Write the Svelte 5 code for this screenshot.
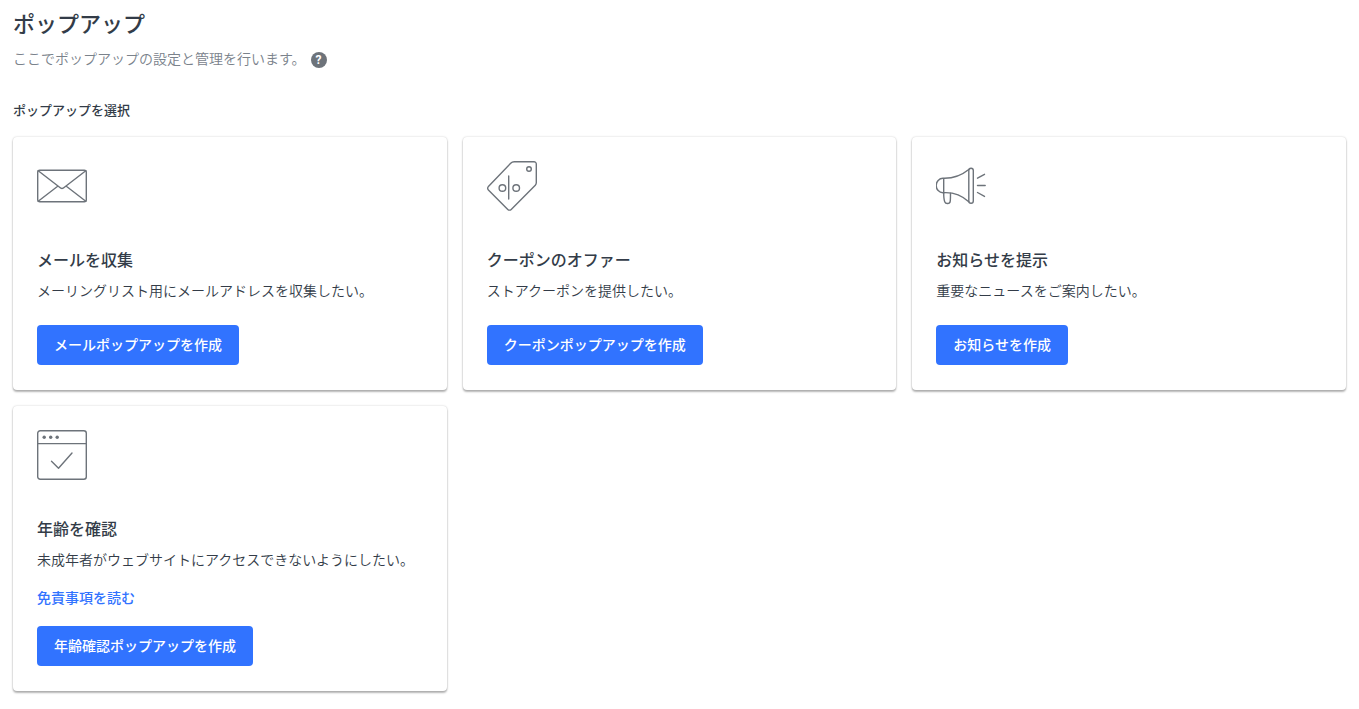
<script lang="ts">
	type Popup = {
		id: 'email' | 'coupon' | 'notice' | 'age';
		title: string;
		description: string;
		action: string;
		link?: string;
	};

	const popups: Popup[] = [
		{
			id: 'email',
			title: 'メールを収集',
			description: 'メーリングリスト用にメールアドレスを収集したい。',
			action: 'メールポップアップを作成'
		},
		{
			id: 'coupon',
			title: 'クーポンのオファー',
			description: 'ストアクーポンを提供したい。',
			action: 'クーポンポップアップを作成'
		},
		{
			id: 'notice',
			title: 'お知らせを提示',
			description: '重要なニュースをご案内したい。',
			action: 'お知らせを作成'
		},
		{
			id: 'age',
			title: '年齢を確認',
			description: '未成年者がウェブサイトにアクセスできないようにしたい。',
			action: '年齢確認ポップアップを作成',
			link: '免責事項を読む'
		}
	];
</script>

<main class="page">
	<header>
		<h1>ポップアップ</h1>
		<div class="intro">
			<p>ここでポップアップの設定と管理を行います。</p>
			<button type="button" class="help">?</button>
		</div>
	</header>

	<h2>ポップアップを選択</h2>

	<div class="cards">
		{#each popups as popup (popup.id)}
			<section class="card">
				<svg class="icon" viewBox="0 0 50 50" aria-hidden="true">
					{#if popup.id === 'email'}
						<rect x="0.7" y="9.2" width="48.6" height="31.6" rx="2" />
						<path d="M1.2 9.7 22.6 26.3Q25 28.7 27.4 26.3L48.8 9.7M1.2 40.3 21 25M48.8 40.3 29 25" />
					{:else if popup.id === 'coupon'}
						<path d="M27.2 .7H47a2.3 2.3 0 0 1 2.3 2.3V21.8a3.5 3.5 0 0 1-1 2.4L24.2 48.4a2.4 2.4 0 0 1-3.4 0L1.4 29a2.4 2.4 0 0 1 0-3.4L23.7 2.2A5 5 0 0 1 27.2 .7Z" />
						<circle cx="42" cy="8" r="2.3" />
						<circle cx="15.4" cy="27" r="3.3" />
						<circle cx="29.2" cy="27" r="3.3" />
						<path d="M21.7 15v23" />
					{:else if popup.id === 'notice'}
						<path d="M7.7 17.3H6.9a6.7 7.2 0 0 0 0 14.4h.8ZM7.7 17.3C17 17.5 26 14 32.8 8.5M7.7 31.7C17 31.2 26 34.5 32.8 40.8" />
						<rect x="32.8" y="7.3" width="4.5" height="35" rx="2.2" />
						<path d="M7.7 31.7c0 4 .2 6.8 1 9 .9 2.4 5.1 2.4 5.5-.4.3-2 .3-5 .3-8.1M41.5 17.2 48.5 13.3M41.5 24.5H49.2M41.5 31.5 48.5 35.4" />
					{:else}
						<rect x="0.7" y="0.7" width="48.6" height="48.6" rx="2.5" />
						<path d="M.7 13.6H49.3M14.5 31.2 21.5 38.2 35 23" />
						<g class="dots">
							<circle cx="7.2" cy="7.2" r="1.7" />
							<circle cx="13.7" cy="7.2" r="1.7" />
							<circle cx="20.2" cy="7.2" r="1.7" />
						</g>
					{/if}
				</svg>
				<h3>{popup.title}</h3>
				<p class="description">{popup.description}</p>
				{#if popup.link}
					<a href="#disclaimer">{popup.link}</a>
				{/if}
				<button type="button" class="create">{popup.action}</button>
			</section>
		{/each}
	</div>
</main>

<style>
	:global(body) {
		margin: 0;
		background: #fff;
	}

	.page {
		padding: 6px 13px 16px;
		font-family: 'Noto Sans CJK JP', sans-serif;
		font-size: 14px;
		line-height: 24px;
		color: #333c48;
	}

	h1,
	h2,
	h3,
	p {
		margin: 0;
		font-weight: 500;
	}

	h1 {
		font-size: 22px;
		line-height: 32px;
	}

	.intro {
		display: flex;
		align-items: center;
		gap: 5px;
		margin-top: 8px;
	}

	.intro p {
		padding-bottom: 4px;
		font-weight: 350;
		color: #7a828b;
	}

	.help {
		width: 16px;
		height: 16px;
		padding: 0;
		border: 0;
		border-radius: 50%;
		background: #6d737a;
		color: #fff;
		font-family: Roboto, sans-serif;
		font-size: 12px;
		font-weight: 700;
		line-height: 16px;
		cursor: pointer;
	}

	h2 {
		margin: 24px 0 15px;
		font-size: 13px;
	}

	.cards {
		display: grid;
		grid-template-columns: repeat(3, minmax(0, 1fr));
		align-items: start;
		gap: 16px;
	}

	.card {
		display: flex;
		flex-direction: column;
		align-items: flex-start;
		padding: 24px 24px 25px;
		border-radius: 4px;
		background: #fff;
		box-shadow:
			0 0 2px rgba(0, 0, 0, 0.22),
			0 2px 2px rgba(0, 0, 0, 0.28);
	}

	.icon {
		width: 50px;
		height: 50px;
		fill: none;
		stroke: #6d737a;
		stroke-width: 1.4;
		stroke-linecap: round;
		stroke-linejoin: round;
	}

	.dots {
		fill: #6d737a;
		stroke: none;
	}

	h3 {
		margin-top: 36px;
		font-size: 16px;
	}

	.description {
		margin-top: 7px;
		font-weight: 350;
	}

	a {
		margin-top: 14px;
		color: #3173ff;
		font-weight: 500;
		text-decoration: none;
	}

	.create {
		height: 40px;
		margin-top: 23px;
		padding: 0 17px 2px;
		border: 0;
		border-radius: 4px;
		background: #3173ff;
		color: #fff;
		font: inherit;
		font-weight: 500;
		cursor: pointer;
	}

	a + .create {
		margin-top: 17px;
	}
</style>
